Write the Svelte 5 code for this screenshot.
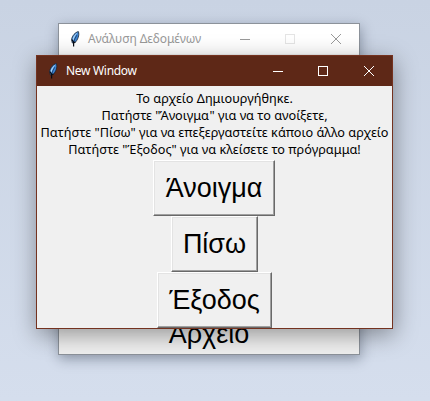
<script>
  const messages = [
    'Το αρχείο Δημιουργήθηκε.',
    'Πατήστε "Άνοιγμα" για να το ανοίξετε,',
    'Πατήστε "Πίσω" για να επεξεργαστείτε κάποιο άλλο αρχείο',
    'Πατήστε "Έξοδος" για να κλείσετε το πρόγραμμα!'
  ];
  const buttons = [
    { label: 'Άνοιγμα', width: 122 },
    { label: 'Πίσω', width: 87 },
    { label: 'Έξοδος', width: 115 }
  ];
</script>

{#snippet feather()}
  <svg class="feather" width="16" height="16" viewBox="0 0 16 16">
    <path d="M11.4 .6C8.4 1.2 5 4.8 4.6 8.6L5.3 12L8 11.6C10.9 8.8 12.6 4.1 11.4 .6Z" fill="#3d86d6" stroke="#182230" stroke-width=".8" />
    <path d="M10.6 1.5C8 2.9 5.6 6 5.4 9.2L6.4 9.4C7.4 6.2 8.8 3.8 10.6 1.5Z" fill="#a9d2f4" />
    <path d="M9.8 4.2Q7.4 8 6.8 11" fill="none" stroke="#142c50" stroke-width=".7" />
    <path d="M4.9 8.5L6.6 11.2V15.4M6.6 11.5L8.6 11" fill="none" stroke="#080b12" stroke-width="1.2" />
  </svg>
{/snippet}

{#snippet controls()}
  <svg class="controls" width="102" height="12" viewBox="0 0 102 12" fill="none" stroke="currentColor">
    <path d="M1 6.5H11" />
    <rect class="maximize" x="46.5" y="1.5" width="9" height="9" />
    <path d="M92 1L102 11M102 1L92 11" />
  </svg>
{/snippet}

<main class="desktop">
  <section class="window back">
    <header>{@render feather()}<span class="title">Ανάλυση Δεδομένων</span>{@render controls()}</header>
    <div class="back-body"><span>Αρχείο</span></div>
  </section>
  <section class="window front">
    <header>{@render feather()}<span class="title">New Window</span>{@render controls()}</header>
    <div class="body">
      <div class="messages">
        {#each messages as message}
          <p>{message}</p>
        {/each}
      </div>
      {#each buttons as b}
        <button style="width: {b.width}px"><span>{b.label}</span></button>
      {/each}
    </div>
  </section>
</main>

<style>
  .desktop {
    position: relative;
    width: 430px;
    height: 401px;
    overflow: hidden;
    background: linear-gradient(#c9d3e3, #d5deed);
    font-family: "Noto Sans", "Open Sans", sans-serif;
  }
  .window {
    position: absolute;
    box-sizing: border-box;
    display: flex;
    flex-direction: column;
    background: #f0f0f0;
  }
  .back {
    left: 58px;
    top: 23px;
    width: 302px;
    height: 332px;
    border: 1px solid #8c929a;
    box-shadow: 1px 4px 12px rgba(20, 30, 50, .36);
  }
  .front {
    left: 36px;
    top: 55px;
    width: 357px;
    height: 274px;
    border: 1px solid #74321f;
    box-shadow: 1px 6px 22px rgba(0, 0, 0, .38);
  }
  header {
    display: flex;
    align-items: center;
    height: 30px;
    flex: none;
    box-sizing: border-box;
    padding: 0 18px 0 8px;
    font-size: 12px;
    background: #5e2817;
    color: #fff;
  }
  .back header {
    background: #fff;
    color: #999;
  }
  .title {
    margin-left: 5px;
    flex: 1;
    line-height: 16px;
    white-space: nowrap;
  }
  .front .title { letter-spacing: -.3px; }
  .back .title { letter-spacing: -.08px; }
  .controls, .feather { flex: none; display: block; }
  .back .maximize { stroke: #e5e5e5; }
  .back-body {
    flex: 1;
    display: flex;
    align-items: flex-end;
    justify-content: center;
    font: 27px/32px "Liberation Sans", Arial, sans-serif;
    padding-bottom: 4px;
  }
  .body {
    display: flex;
    flex-direction: column;
    align-items: center;
    height: 242px;
  }
  .messages {
    padding: 4px 0 2px;
    height: 68px;
    flex: none;
    color: #000;
  }
  p {
    margin: 0;
    height: 17px;
    font-size: 12.7px;
    line-height: 17px;
    text-align: center;
    white-space: nowrap;
  }
  button {
    box-sizing: border-box;
    height: 56px;
    flex: none;
    padding: 0;
    border: 1px solid;
    border-color: #fff #696969 #696969 #fff;
    box-shadow: inset -1px -1px #a0a0a0, inset 1px 1px #e3e3e3;
    background: #f0f0f0;
    color: #000;
    font: 27px/52px "Liberation Sans", Arial, sans-serif;
    white-space: nowrap;
  }
  button:first-of-type { margin-right: 1px; }
  button span { display: block; }
</style>
